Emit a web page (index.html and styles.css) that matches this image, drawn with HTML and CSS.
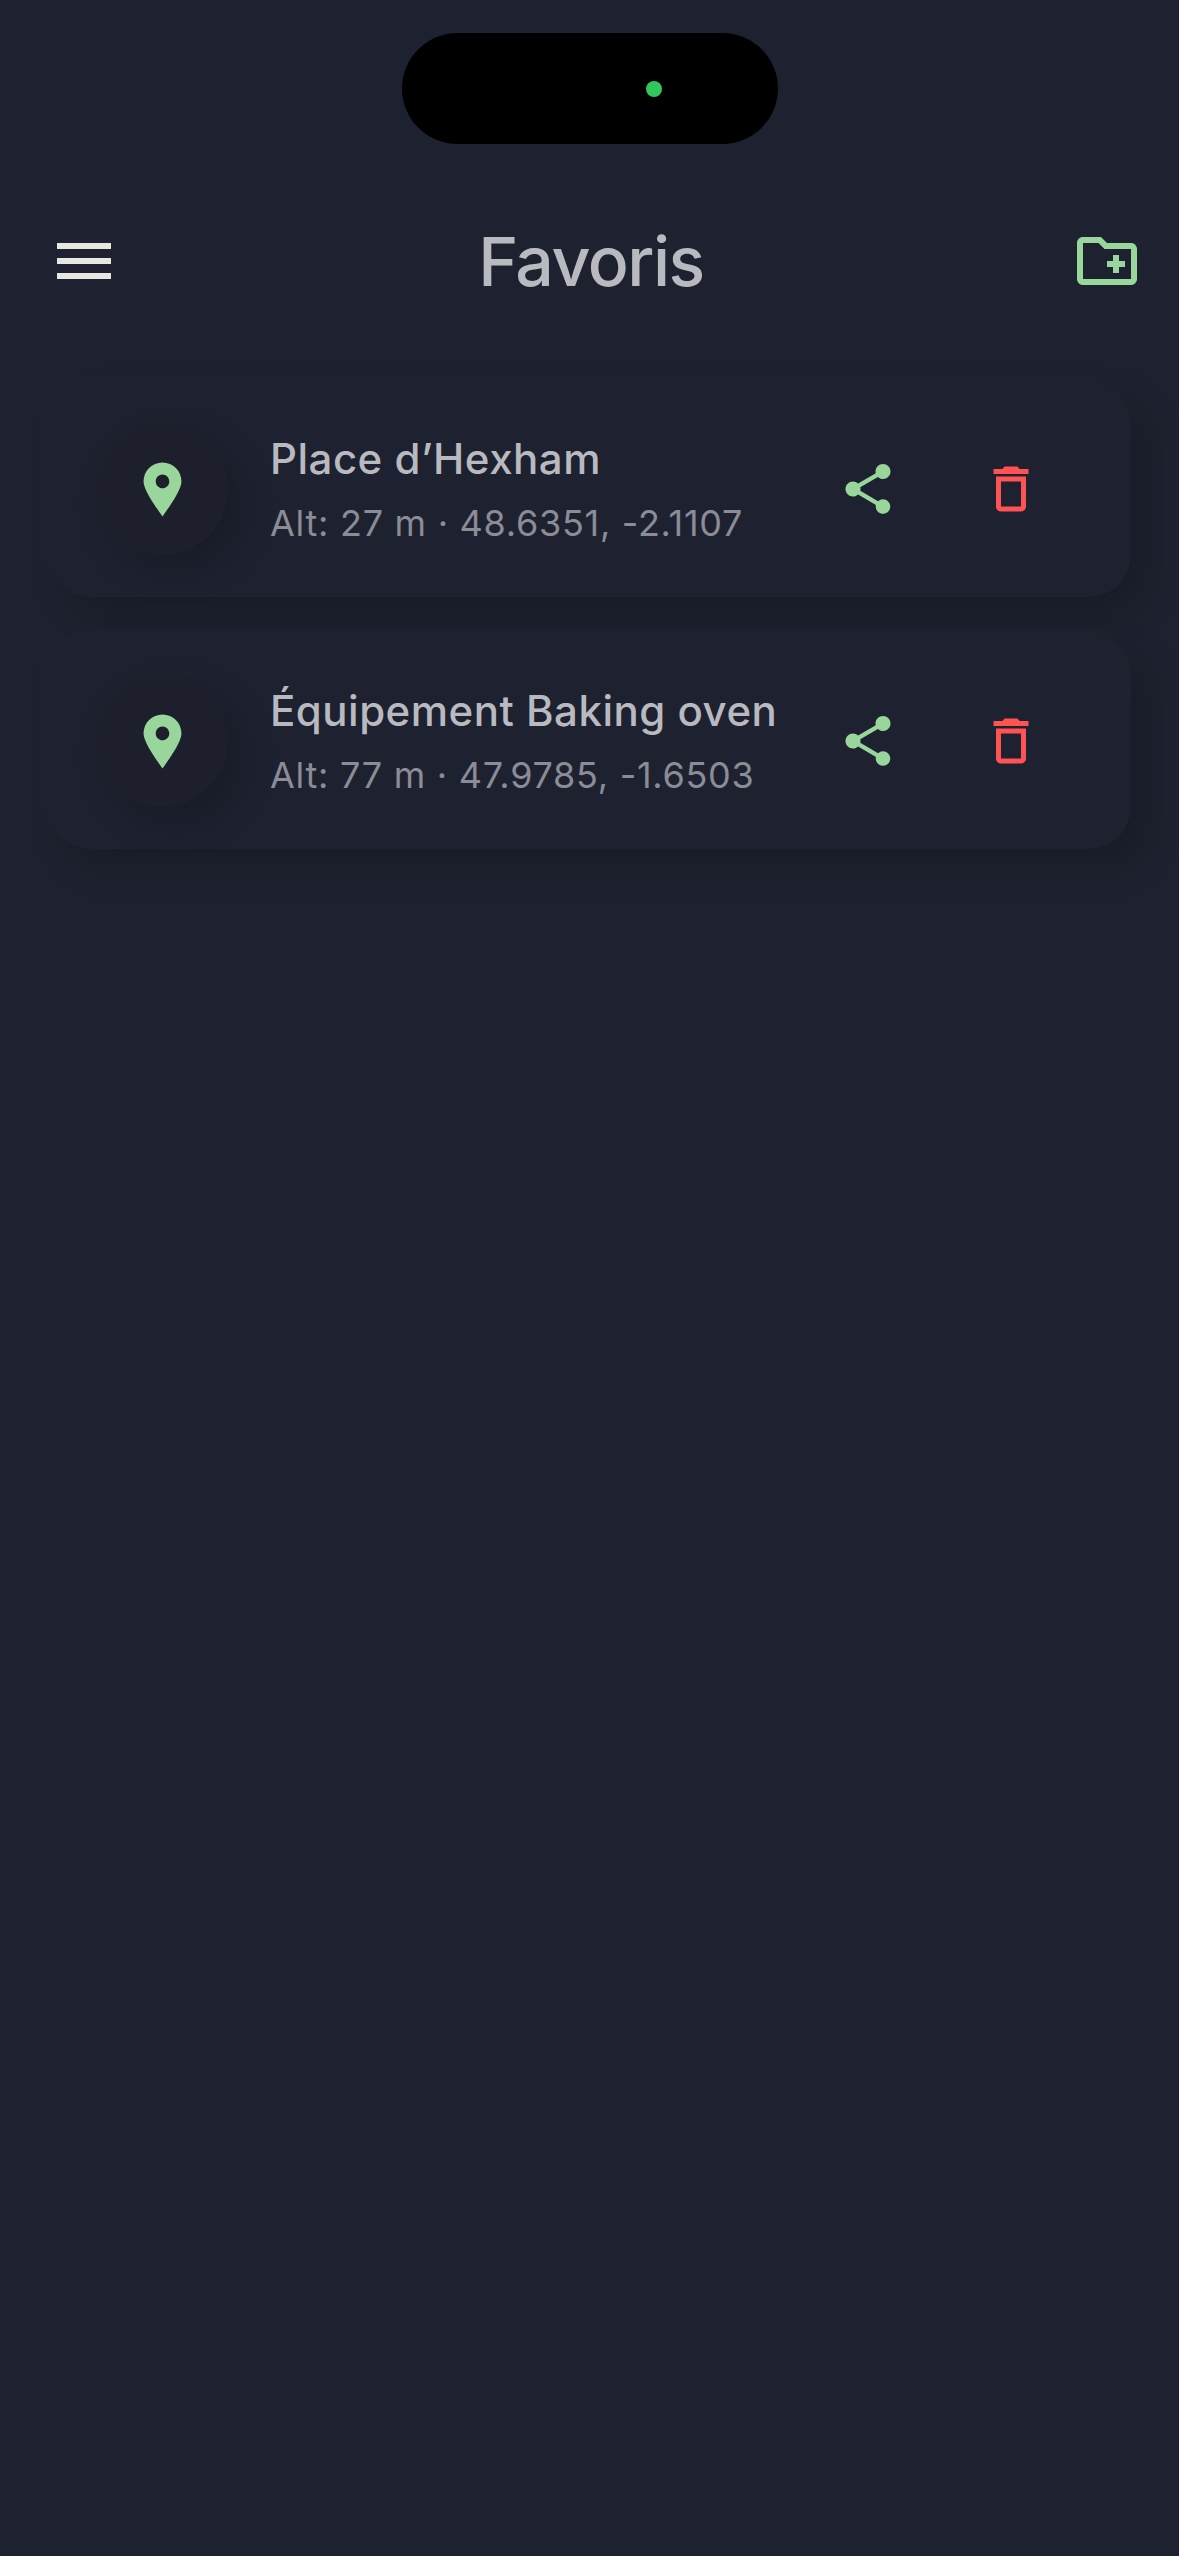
FILE: index.html
```html
<!DOCTYPE html>
<html lang="fr">
<head>
  <meta charset="UTF-8" />
  <meta name="viewport" content="width=device-width, initial-scale=1.0"/>
  <title>Favoris</title>
  <link rel="stylesheet" href="styles.css">
</head>
<body>
  <div class="status">
    <div class="island"><span class="camera-dot"></span></div>
  </div>

  <header class="topbar">
    <button class="menu-btn" aria-label="Menu">
      <span></span>
      <span></span>
      <span></span>
    </button>
    <h1>Favoris</h1>
    <button class="folder-btn" aria-label="Nouveau dossier">
      <svg viewBox="0 0 24 24"><path d="M20 6h-8l-2-2H4c-1.11 0-2 .89-2 2v12c0 1.11.89 2 2 2h16c1.11 0 2-.89 2-2V8c0-1.11-.89-2-2-2zm0 12H4V6h5.17l2 2H20v10zM14 16h2v-2h2v-2h-2v-2h-2v2h-2v2h2v2z"/></svg>
    </button>
  </header>

  <main class="list">
    <div class="card">
      <div class="pin">
        <svg viewBox="0 0 24 24"><path d="M12 2C8.13 2 5 5.13 5 9c0 3.2 4.5 9.3 7 13 2.500-3.700 7-9.800 7-13 0-3.870-3.130-7-7-7zm0 9.500c-1.380 0-2.500-1.120-2.500-2.500s1.120-2.500 2.500-2.500 2.500 1.120 2.500 2.500-1.120 2.500-2.500 2.500z"/></svg>
      </div>
      <div class="info">
        <div class="name">Place d’Hexham</div>
        <div class="meta">Alt: 27 m · 48.6351, -2.1107</div>
      </div>
      <div class="actions">
        <svg class="share" viewBox="0 0 24 24"><path d="M18 16.08c-.76 0-1.44.3-1.96.77L8.91 12.7c.05-.23.09-.46.09-.7s-.04-.47-.09-.7l7.05-4.11c.54.5 1.25.81 2.04.81 1.66 0 3-1.34 3-3s-1.34-3-3-3-3 1.34-3 3c0 .24.04.47.09.7L8.04 9.81C7.5 9.31 6.79 9 6 9c-1.66 0-3 1.34-3 3s1.34 3 3 3c.79 0 1.5-.31 2.04-.81l7.12 4.16c-.05.21-.08.43-.08.65 0 1.61 1.31 2.92 2.92 2.92s2.92-1.31 2.92-2.92-1.31-2.92-2.92-2.92z"/></svg>
        <svg class="trash" viewBox="0 0 24 24"><path d="M16 9v10H8V9h8m-1.5-6h-5l-1 1H5v2h14V4h-3.5l-1-1zM18 7H6v12c0 1.1.9 2 2 2h8c1.1 0 2-.9 2-2V7z"/></svg>
      </div>
    </div>

    <div class="card">
      <div class="pin">
        <svg viewBox="0 0 24 24"><path d="M12 2C8.13 2 5 5.13 5 9c0 3.2 4.5 9.3 7 13 2.500-3.700 7-9.800 7-13 0-3.870-3.130-7-7-7zm0 9.500c-1.380 0-2.500-1.120-2.500-2.500s1.120-2.500 2.500-2.500 2.500 1.120 2.500 2.500-1.120 2.500-2.500 2.500z"/></svg>
      </div>
      <div class="info">
        <div class="name">Équipement Baking oven</div>
        <div class="meta">Alt: 77 m · 47.9785, -1.6503</div>
      </div>
      <div class="actions">
        <svg class="share" viewBox="0 0 24 24"><path d="M18 16.08c-.76 0-1.44.3-1.96.77L8.91 12.7c.05-.23.09-.46.09-.7s-.04-.47-.09-.7l7.05-4.11c.54.5 1.25.81 2.04.81 1.66 0 3-1.34 3-3s-1.34-3-3-3-3 1.34-3 3c0 .24.04.47.09.7L8.04 9.81C7.5 9.31 6.79 9 6 9c-1.66 0-3 1.34-3 3s1.34 3 3 3c.79 0 1.5-.31 2.04-.81l7.12 4.16c-.05.21-.08.43-.08.65 0 1.61 1.31 2.92 2.92 2.92s2.92-1.31 2.92-2.92-1.31-2.92-2.92-2.92z"/></svg>
        <svg class="trash" viewBox="0 0 24 24"><path d="M16 9v10H8V9h8m-1.5-6h-5l-1 1H5v2h14V4h-3.5l-1-1zM18 7H6v12c0 1.1.9 2 2 2h8c1.1 0 2-.9 2-2V7z"/></svg>
      </div>
    </div>
  </main>
</body>
</html>
```

FILE: styles.css
```css
html, body {
  height: 100%;
}
body {
  font-family: Inter, "Noto Sans", sans-serif;
  background: #1e2230;
  margin: 0;
  overflow: hidden;
}
.status {
  display: flex;
  justify-content: center;
  padding-top: 33px;
}
.island {
  position: relative;
  width: 376px;
  height: 111px;
  background: #000;
  border-radius: 56px;
}
.camera-dot {
  position: absolute;
  left: 244px;
  top: 48px;
  width: 16px;
  height: 16px;
  border-radius: 50%;
  background: #30c85a;
}
.topbar {
  display: flex;
  justify-content: space-between;
  align-items: center;
  height: 72px;
  margin-top: 81px;
  padding: 0 36px 0 57px;
}
.topbar h1 {
  flex: 1;
  margin: 0;
  text-align: center;
  font-size: 68px;
  line-height: 72px;
  font-weight: 500;
  letter-spacing: -1.5px;
  color: #b9bac0;
}
.menu-btn,
.folder-btn {
  background: none;
  border: none;
  padding: 0;
}
.menu-btn {
  display: flex;
  flex-direction: column;
  gap: 9px;
  width: 54px;
}
.menu-btn span {
  display: block;
  height: 6px;
  background: #e6e8e0;
}
.folder-btn svg {
  display: block;
  width: 72px;
  height: 72px;
  fill: #98d69b;
}
.list {
  display: flex;
  flex-direction: column;
  gap: 36px;
  margin: 84px 48px 0;
}
.card {
  display: flex;
  align-items: center;
  height: 216px;
  padding: 0 90.5px 0 48px;
  background: #1e2130;
  border-radius: 42px;
  box-shadow: 18px 18px 36px rgba(0, 0, 0, 0.18), -8px -8px 20px rgba(255, 255, 255, 0.014);
}
.pin {
  display: flex;
  justify-content: center;
  align-items: center;
  flex: none;
  width: 132px;
  height: 132px;
  border-radius: 50%;
  background: #1d202c;
  box-shadow: 14px 16px 36px rgba(0, 0, 0, 0.18);
}
.pin svg {
  width: 65px;
  height: 65px;
  fill: #98d69b;
}
.info {
  flex: 1;
  min-width: 0;
  margin-left: 42px;
}
.name {
  font-size: 42px;
  line-height: 50px;
  font-weight: 500;
  letter-spacing: 0.5px;
  color: #b9bac0;
  white-space: nowrap;
}
.meta {
  margin-top: 17px;
  font-size: 36px;
  line-height: 44px;
  letter-spacing: 0.72px;
  color: #8a8c96;
  white-space: nowrap;
}
.actions {
  display: flex;
  align-items: center;
  gap: 83px;
  flex: none;
}
.actions svg {
  display: block;
  width: 60px;
  height: 60px;
}
.share {
  fill: #98d69b;
}
.trash {
  fill: #ff5252;
}
```
